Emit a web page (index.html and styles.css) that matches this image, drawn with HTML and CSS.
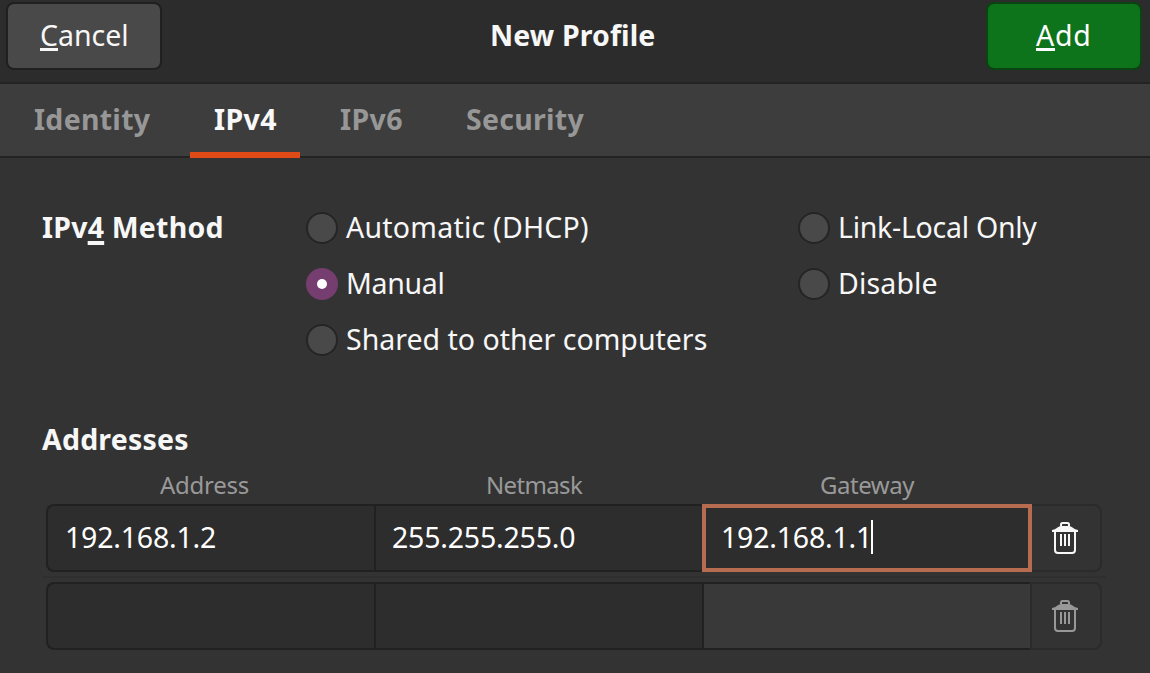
FILE: index.html
```html
<!DOCTYPE html>
<html lang="en">
<head>
<meta charset="utf-8">
<title>New Profile</title>
<link rel="stylesheet" href="styles.css">
</head>
<body>
<header class="headerbar">
  <button class="button cancel"><span class="t"><u>C</u>ancel</span></button>
  <h1 class="title"><span class="t">New Profile</span></h1>
  <button class="button suggested"><span class="t"><u>A</u>dd</span></button>
</header>
<nav class="tabs">
  <a class="tab tab-identity"><span class="t">Identity</span></a>
  <a class="tab tab-v4 active"><span class="t">IPv4</span></a>
  <a class="tab tab-v6"><span class="t">IPv6</span></a>
  <a class="tab tab-security"><span class="t">Security</span></a>
</nav>
<main class="page">
  <section class="method">
    <h2 class="heading heading-method"><span class="t">IPv<u>4</u> Method</span></h2>
    <div class="options">
      <label class="option automatic"><i class="radio"></i><span class="t">Automatic (DHCP)</span></label>
      <label class="option link-local"><i class="radio"></i><span class="t">Link-Local Only</span></label>
      <label class="option manual"><i class="radio checked"></i><span class="t">Manual</span></label>
      <label class="option disable"><i class="radio"></i><span class="t">Disable</span></label>
      <label class="option shared"><i class="radio"></i><span class="t">Shared to other computers</span></label>
    </div>
  </section>
  <h2 class="heading heading-addresses"><span class="t">Addresses</span></h2>
  <div class="columns">
    <span class="col-address"><span class="t">Address</span></span>
    <span class="col-netmask"><span class="t">Netmask</span></span>
    <span class="col-gateway"><span class="t">Gateway</span></span>
  </div>
  <div class="row">
    <div class="entry first"><span class="t">192.168.1.2</span></div>
    <div class="entry mask"><span class="t">255.255.255.0</span></div>
    <div class="entry focused"><span class="t">192.168.1.1</span><i class="caret"></i></div>
    <div class="delete">
      <svg class="trash" viewBox="0 0 26 32"><path d="M9 4V2.500Q9 1 10.500 1h5q1.500 0 1.500 1.500V4" fill="none" stroke="currentColor" stroke-width="2"/><path d="M0 10V8Q3 7.500 5.500 5.500Q7 4 9 4h8q2 0 3.500 1.500Q23 7.500 26 8v2z" fill="currentColor"/><path d="M3 9v19q0 3 3 3h14q3 0 3-3V9M9 12v12M13 12v12M17 12v12" fill="none" stroke="currentColor" stroke-width="2"/></svg>
    </div>
  </div>
  <div class="separator"></div>
  <div class="row">
    <div class="entry first"></div>
    <div class="entry"></div>
    <div class="entry blank"></div>
    <div class="delete disabled">
      <svg class="trash" viewBox="0 0 26 32"><path d="M9 4V2.500Q9 1 10.500 1h5q1.500 0 1.500 1.500V4" fill="none" stroke="currentColor" stroke-width="2"/><path d="M0 10V8Q3 7.500 5.500 5.500Q7 4 9 4h8q2 0 3.500 1.500Q23 7.500 26 8v2z" fill="currentColor"/><path d="M3 9v19q0 3 3 3h14q3 0 3-3V9M9 12v12M13 12v12M17 12v12" fill="none" stroke="currentColor" stroke-width="2"/></svg>
    </div>
  </div>
</main>
</body>
</html>
```
FILE: styles.css
```css
* { box-sizing: border-box; }
body {
  margin: 0;
  width: 1150px;
  height: 673px;
  overflow: hidden;
  background: #333333;
  color: #f7f7f7;
  font: 28.5px/40px "Noto Sans", sans-serif;
}
.t { display: inline-block; white-space: nowrap; }
u { text-decoration: underline 2.5px; text-underline-offset: 2px; text-decoration-skip-ink: none; }
.headerbar {
  display: grid;
  grid-template-columns: 156px 1fr 156px;
  height: 84px;
  padding: 2px 8px 0 6px;
  background: #2c2c2c;
  border-bottom: 2px solid #232323;
}
.button {
  height: 68px;
  padding: 0 0 2px 32px;
  border: 2px solid #202020;
  border-radius: 8px;
  background: #494949;
  color: inherit;
  font: inherit;
  text-align: left;
}
.suggested {
  padding-left: 48px;
  border-color: #0b4412;
  background: #0e741b;
  color: #fff;
  letter-spacing: 0.8px;
}
.title { margin: 0; padding: 13px 0 0 328px; font-size: 28.5px; font-weight: 700; letter-spacing: 0.12px; }
.tabs {
  display: flex;
  height: 74px;
  background: #3d3d3d;
  border-bottom: 2px solid #232323;
  color: #979797;
  font-weight: 700;
  letter-spacing: 0.27px;
}
.tab { height: 74px; padding: 15px 0 0 24px; }
.tab-identity { width: 190px; padding-left: 34px; }
.tab-v4 { width: 110px; letter-spacing: 0.4px; }
.tab-v6 { width: 142px; padding-left: 40px; letter-spacing: 0.4px; }
.active { color: #f9f9f9; border-bottom: 6px solid #df4a16; }
.page { padding: 42px 48px 0 42px; }
.heading { margin: 0; font-size: 28.5px; font-weight: 700; letter-spacing: 0.2px; }
.method { display: flex; height: 219px; }
.heading-method { width: 264px; padding-top: 7px; }
.heading-method u { text-decoration-thickness: 4px; text-underline-offset: 3px; }
.options {
  display: grid;
  grid-template-columns: 492px 300px;
  grid-template-rows: repeat(3, 56px);
}
.option { display: flex; align-items: center; gap: 8px; }
.option .t { padding-bottom: 2px; }
.automatic { letter-spacing: 0.24px; }
.link-local { letter-spacing: -0.27px; }
.manual { letter-spacing: -0.3px; }
.disable { letter-spacing: 0.15px; }
.radio {
  width: 32px;
  height: 32px;
  border: 2px solid #252525;
  border-radius: 50%;
  background: #494949;
}
.checked {
  display: grid;
  place-items: center;
  border: 0;
  background: #763e70;
}
.checked::after { content: ""; width: 10px; height: 10px; border-radius: 50%; background: #fff; }
.columns {
  display: grid;
  grid-template-columns: 328px 328px 328px;
  height: 45px;
  padding: 9px 0 0 4px;
  color: #999;
  font-size: 24px;
  line-height: 34px;
}
.col-address { padding-left: 114px; letter-spacing: -0.25px; }
.col-netmask { padding-left: 112px; letter-spacing: -0.65px; }
.col-gateway { padding-left: 118px; letter-spacing: -0.45px; }
.row {
  display: grid;
  grid-template-columns: 328px 328px 328px 72px;
  width: 1056px;
  height: 68px;
  margin-left: 4px;
}
.entry {
  display: flex;
  padding: 11px 0 0 17px;
  border: 2px solid #212121;
  border-right: 0;
  background: #2d2d2d;
  color: #fff;
  letter-spacing: -0.2px;
}
.first { border-radius: 8px 0 0 8px; }
.mask { padding-left: 16px; }
.focused {
  z-index: 1;
  width: 330px;
  padding: 9px 0 0 15px;
  border: 4px solid #b76b4f;
}
.caret { width: 2px; height: 34px; margin: 3px 0 0 -1px; background: #fff; }
.blank { background: #393939; }
.delete {
  padding: 16px 0 0 20px;
  border: 2px solid #2b2b2b;
  border-radius: 0 8px 8px 0;
}
.disabled { color: #989898; }
.trash { display: block; width: 26px; height: 32px; }
.separator { width: 1064px; height: 2px; margin: 4px 0; background: #2f2f2f; }
```
